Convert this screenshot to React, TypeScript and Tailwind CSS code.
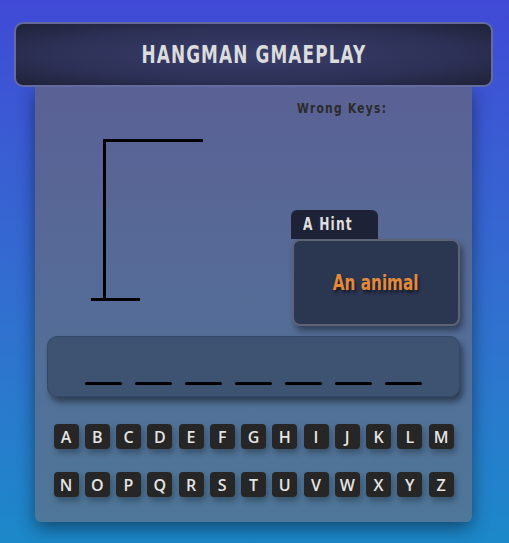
const DISPLAY = { fontFamily: '"DejaVu Sans Condensed", "DejaVu Sans", sans-serif' };

const ROW1 = "ABCDEFGHIJKLM".split("");
const ROW2 = "NOPQRSTUVWXYZ".split("");

function Key({ letter }: { letter: string }) {
  return (
    <button
      className="w-[25px] h-[25px] rounded-[4px] bg-[#262626] text-[#e4e4e4] text-[16px] font-semibold flex items-center justify-center shadow-[2px_4px_6px_rgba(0,0,0,0.3)]"
      style={{ fontFamily: '"Open Sans", "Noto Sans", sans-serif' }}
    >
      {letter}
    </button>
  );
}

export default function App() {
  return (
    <div className="w-[509px] h-[543px] overflow-hidden bg-gradient-to-b from-[#4049d6] to-[#1b88c9] pt-[22px]">
      {/* header */}
      <div className="relative z-10 ml-[14px] w-[479px] h-[65px] rounded-[9px] border-2 border-[#646b9f] bg-[radial-gradient(ellipse_at_center,#393e6b_0%,#2d3157_60%,#1f2238_100%)] flex items-center justify-center">
        <h1
          className="inline-block scale-x-[0.75] text-[25px] font-bold tracking-[1.5px] text-[#dcdcdc] whitespace-nowrap"
          style={DISPLAY}
        >
          HANGMAN GMAEPLAY
        </h1>
      </div>

      {/* panel */}
      <div className="ml-[35px] w-[437px] h-[435px] rounded-b-[6px] bg-gradient-to-b from-[#5a6195] to-[#4e7799] shadow-[0_6px_18px_rgba(0,0,0,0.45)] px-3">
        <div className="flex h-[239px]">
          <div className="w-[244px] h-full">
            <svg width="244" height="239" viewBox="0 0 244 239">
              <path d="M57.5 213 V 53.5 H 156" fill="none" stroke="#000" strokeWidth="3" />
              <path d="M44 212.5 H 93" fill="none" stroke="#000" strokeWidth="3" />
            </svg>
          </div>
          <div className="w-[168px] flex flex-col">
            <div
              className="mt-[11px] ml-[6px] inline-block origin-left scale-x-[0.85] text-[14px] font-bold tracking-[1.5px] text-[#2b2b2b] whitespace-nowrap"
              style={DISPLAY}
            >
              Wrong Keys:
            </div>
            <div className="mt-auto">
              <div className="w-[87px] h-[29px] rounded-t-[6px] bg-[#1e2236] flex items-center pl-[12px]">
                <span
                  className="inline-block origin-left scale-x-[0.8] text-[17px] font-bold tracking-[1.5px] text-[#dedede] whitespace-nowrap"
                  style={DISPLAY}
                >
                  A Hint
                </span>
              </div>
              <div className="ml-[1px] w-[168px] h-[87px] rounded-[8px] border-2 border-[#5c6375] bg-[#2b3651] shadow-[3px_5px_6px_rgba(0,0,0,0.4)] flex items-center justify-center">
                <span
                  className="inline-block scale-x-[0.77] text-[22px] font-bold text-[#e4893a] whitespace-nowrap [text-shadow:2px_3px_3px_rgba(0,0,0,0.5)]"
                  style={DISPLAY}
                >
                  An animal
                </span>
              </div>
            </div>
          </div>
        </div>

        {/* word */}
        <div className="mt-[10px] h-[61px] rounded-[10px] border border-[#34486a] bg-[#3e5372] shadow-[3px_5px_6px_rgba(0,0,0,0.45)] flex items-end justify-center gap-[13px] pb-[11px]">
          {Array.from({ length: 7 }).map((_, i) => (
            <span key={i} className="w-[37px] h-[3px] rounded-[2px] bg-black" />
          ))}
        </div>

        {/* keyboard */}
        <div className="mt-[27px] flex flex-col gap-[23px]">
          <div className="flex justify-center gap-[6.25px]">
            {ROW1.map((l) => (
              <Key key={l} letter={l} />
            ))}
          </div>
          <div className="flex justify-center gap-[6.25px]">
            {ROW2.map((l) => (
              <Key key={l} letter={l} />
            ))}
          </div>
        </div>
      </div>
    </div>
  );
}
